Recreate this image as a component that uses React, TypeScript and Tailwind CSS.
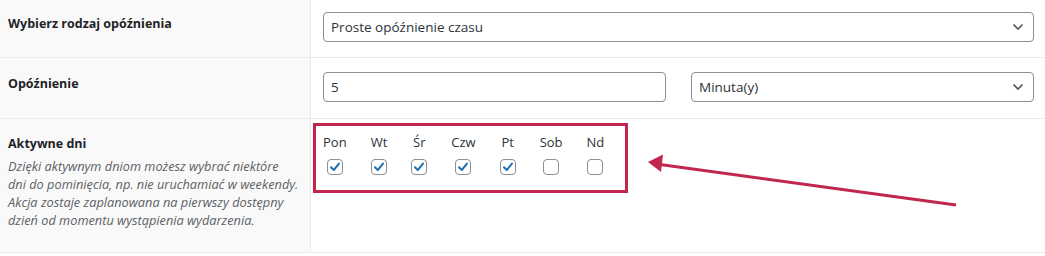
import React from 'react';

const days = [
  { label: 'Pon', checked: true },
  { label: 'Wt', checked: true },
  { label: 'Śr', checked: true },
  { label: 'Czw', checked: true },
  { label: 'Pt', checked: true },
  { label: 'Sob', checked: false },
  { label: 'Nd', checked: false },
];

const Chevron = () => (
  <svg width="12" height="8" viewBox="0 0 12 8" className="absolute right-[9px] top-1/2 -translate-y-1/2">
    <path d="M1.5 1.5 L6 6 L10.5 1.5" fill="none" stroke="#50575e" strokeWidth="1.6" />
  </svg>
);

const Select: React.FC<{ value: string; className?: string }> = ({ value, className }) => (
  <div className={`relative h-[30px] rounded-[4px] border border-[#8c8f94] bg-white pl-[7px] flex items-center text-[13.5px] text-[#2c3338] ${className ?? ''}`}>
    {value}
    <Chevron />
  </div>
);

const Checkbox: React.FC<{ checked: boolean }> = ({ checked }) => (
  <span className="w-[16px] h-[16px] rounded-[4px] border border-[#8c8f94] bg-white flex items-center justify-center">
    {checked && (
      <svg width="14" height="14" viewBox="0 0 14 14">
        <path d="M3 7.2 L5.8 10 L11 3.6" fill="none" stroke="#2271b1" strokeWidth="2" strokeLinecap="round" strokeLinejoin="round" />
      </svg>
    )}
  </span>
);

export default function App() {
  return (
    <div className="w-[1045px] h-[256px] bg-white overflow-hidden" style={{ fontFamily: '"Open Sans", "Noto Sans", sans-serif' }}>
      {/* Delay type */}
      <div className="flex h-[58px] border-b border-[#ebebeb]">
        <div className="w-[311px] shrink-0 bg-[#f9f9f9] border-r border-[#ebebeb] pl-[8px] pt-[10px]">
          <span className="text-[12.5px] font-bold text-[#1d2327] leading-[20px]">Wybierz rodzaj opóźnienia</span>
        </div>
        <div className="flex-1 pl-[12px] pr-[11px] pt-[12px]">
          <Select value="Proste opóźnienie czasu" />
        </div>
      </div>

      {/* Delay */}
      <div className="flex h-[61px] border-b border-[#ebebeb]">
        <div className="w-[311px] shrink-0 bg-[#f9f9f9] border-r border-[#ebebeb] pl-[8px] pt-[12px]">
          <span className="text-[12.5px] font-bold text-[#1d2327] leading-[20px]">Opóźnienie</span>
        </div>
        <div className="flex-1 pl-[12px] pr-[11px] pt-[14px] flex gap-[25px]">
          <div className="w-[343px] h-[30px] rounded-[4px] border border-[#8c8f94] bg-white pl-[7px] flex items-center text-[13.5px] text-[#2c3338]">
            5
          </div>
          <Select value="Minuta(y)" className="flex-1" />
        </div>
      </div>

      {/* Active days */}
      <div className="relative flex h-[134px] border-b border-[#ebebeb]">
        <div className="w-[311px] shrink-0 bg-[#f9f9f9] border-r border-[#ebebeb] pl-[8px] pt-[15px]">
          <div className="text-[12.5px] font-bold text-[#1d2327] leading-[20px]">Aktywne dni</div>
          <p className="mt-[3px] text-[12.75px] italic text-[#5c6166] leading-[18px]">
            Dzięki aktywnym dniom możesz wybrać niektóre
            <br />
            dni do pominięcia, np. nie uruchamiać w weekendy.
            <br />
            Akcja zostaje zaplanowana na pierwszy dostępny
            <br />
            dzień od momentu wystąpienia wydarzenia.
          </p>
        </div>
        <div className="flex-1 pl-[2px] pt-[4px]">
          <div className="w-[315px] h-[70px] border-[3px] border-[#c1264e] pl-[7px] pt-[6px] flex gap-[24px]">
            {days.map(d => (
              <div key={d.label} className="flex flex-col items-center">
                <span className="text-[13px] text-[#2c3338] leading-[20px]">{d.label}</span>
                <span className="mt-[7px]">
                  <Checkbox checked={d.checked} />
                </span>
              </div>
            ))}
          </div>
        </div>

        {/* Annotation arrow */}
        <svg className="absolute left-0 top-0 pointer-events-none" width="1045" height="134" viewBox="0 119 1045 134">
          <line x1="956" y1="205" x2="660" y2="164.5" stroke="#c1264e" strokeWidth="3" />
          <polygon points="648,162 663,154.5 661,172" fill="#c1264e" />
        </svg>
      </div>
    </div>
  );
}
